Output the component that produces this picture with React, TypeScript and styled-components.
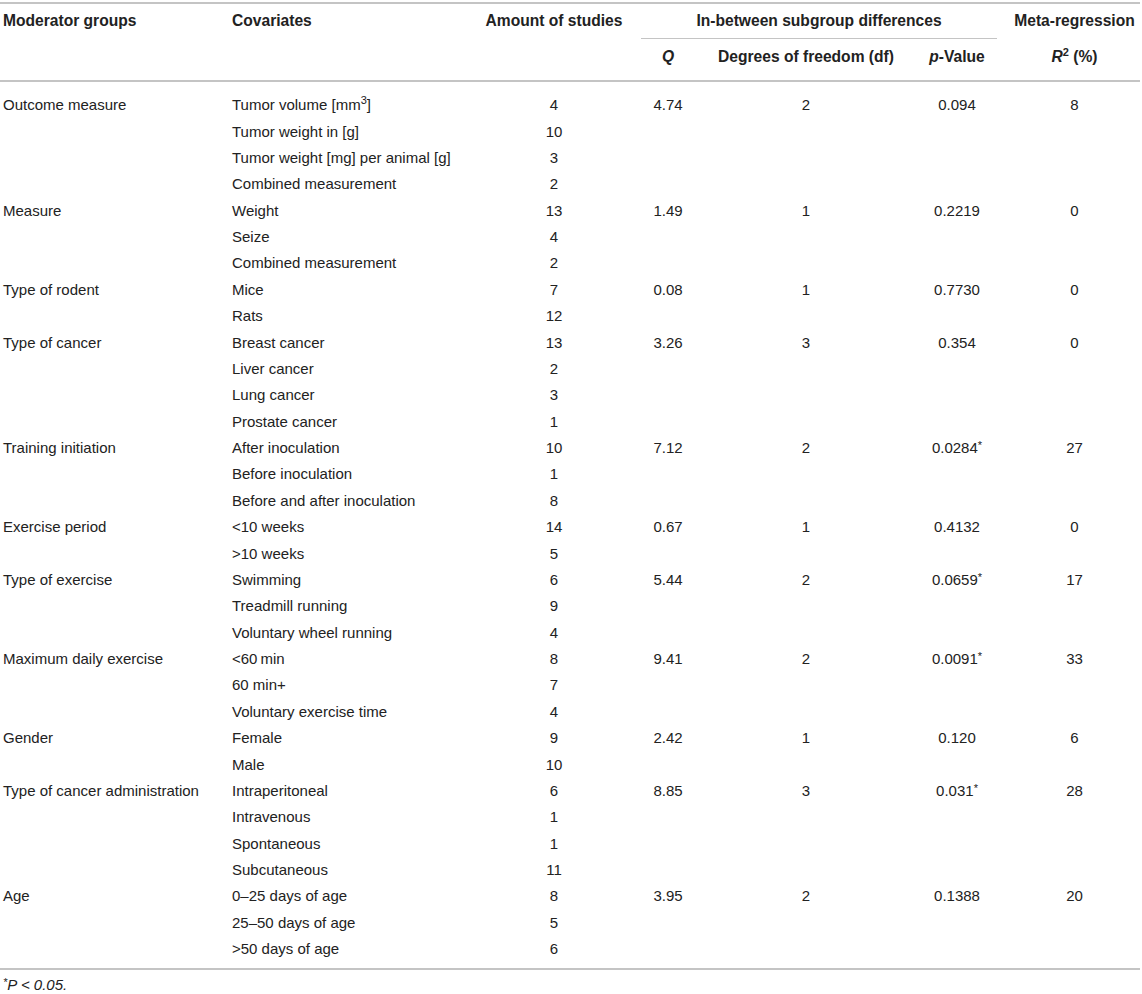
import React from "react";
import styled, { createGlobalStyle } from "styled-components";

const GlobalStyle = createGlobalStyle`
  html, body { margin: 0; padding: 0; background: #ffffff; }
  body { font-family: "Liberation Sans", Arial, sans-serif; color: #222222; }
`;

const Page = styled.div`
  width: 1142px;
  padding-top: 2px;
`;

const Table = styled.table`
  width: 1140px;
  border-collapse: collapse;
  table-layout: fixed;
  font-family: "Liberation Sans", Arial, sans-serif;
  font-size: 15px;
  line-height: 16px;
  color: #222222;
  border-top: 2px solid #c4c4c4;
  border-bottom: 2px solid #c4c4c4;
`;

const Head = styled.thead`
  border-bottom: 2px solid #c4c4c4;
`;

const Th = styled.th<{ $align?: "left" | "center"; $row?: 1 | 2 }>`
  font-weight: bold;
  font-size: 15.6px;
  text-align: ${(p) => p.$align ?? "center"};
  vertical-align: top;
  padding: ${(p) => (p.$row === 2 ? "10px 0 15px" : "9px 0 10px")};
  padding-left: ${(p) => (p.$align === "left" ? "3px" : "0")};
  white-space: nowrap;
`;

const GroupTh = styled(Th)`
  background-image: linear-gradient(#c4c4c4, #c4c4c4);
  background-repeat: no-repeat;
  background-size: calc(100% - 24px) 1px;
  background-position: center bottom;
`;

const Td = styled.td<{ $align?: "left" | "center" }>`
  text-align: ${(p) => p.$align ?? "center"};
  padding: 5.2px 0;
  padding-left: ${(p) => (p.$align === "left" ? "3px" : "0")};
  white-space: nowrap;
  vertical-align: middle;
`;

const Body = styled.tbody`
  tr:first-child td { padding-top: 15.2px; }
  tr:last-child td { padding-bottom: 11.2px; }
`;

const Star = styled.sup`
  font-size: 11px;
  line-height: 0;
  vertical-align: 4px;
`;

const Sup = styled.sup`
  font-size: 11px;
  line-height: 0;
  vertical-align: 6px;
`;

const Em = styled.i`
  font-weight: bold;
  font-style: italic;
`;

const Footnote = styled.div`
  padding: 7px 0 0 3px;
  font-size: 15px;
  line-height: 16px;
  font-style: italic;
  color: #222222;
`;

type Row = {
  group?: string;
  cov: React.ReactNode;
  n: string;
  q?: string;
  df?: string;
  p?: string;
  sig?: boolean;
  r2?: string;
};

const rows: Row[] = [
  { group: "Outcome measure", cov: <>Tumor volume [mm<Sup>3</Sup>]</>, n: "4", q: "4.74", df: "2", p: "0.094", r2: "8" },
  { cov: "Tumor weight in [g]", n: "10" },
  { cov: "Tumor weight [mg] per animal [g]", n: "3" },
  { cov: "Combined measurement", n: "2" },
  { group: "Measure", cov: "Weight", n: "13", q: "1.49", df: "1", p: "0.2219", r2: "0" },
  { cov: "Seize", n: "4" },
  { cov: "Combined measurement", n: "2" },
  { group: "Type of rodent", cov: "Mice", n: "7", q: "0.08", df: "1", p: "0.7730", r2: "0" },
  { cov: "Rats", n: "12" },
  { group: "Type of cancer", cov: "Breast cancer", n: "13", q: "3.26", df: "3", p: "0.354", r2: "0" },
  { cov: "Liver cancer", n: "2" },
  { cov: "Lung cancer", n: "3" },
  { cov: "Prostate cancer", n: "1" },
  { group: "Training initiation", cov: "After inoculation", n: "10", q: "7.12", df: "2", p: "0.0284", sig: true, r2: "27" },
  { cov: "Before inoculation", n: "1" },
  { cov: "Before and after inoculation", n: "8" },
  { group: "Exercise period", cov: "<10 weeks", n: "14", q: "0.67", df: "1", p: "0.4132", r2: "0" },
  { cov: ">10 weeks", n: "5" },
  { group: "Type of exercise", cov: "Swimming", n: "6", q: "5.44", df: "2", p: "0.0659", sig: true, r2: "17" },
  { cov: "Treadmill running", n: "9" },
  { cov: "Voluntary wheel running", n: "4" },
  { group: "Maximum daily exercise", cov: "<60\u2009min", n: "8", q: "9.41", df: "2", p: "0.0091", sig: true, r2: "33" },
  { cov: "60 min+", n: "7" },
  { cov: "Voluntary exercise time", n: "4" },
  { group: "Gender", cov: "Female", n: "9", q: "2.42", df: "1", p: "0.120", r2: "6" },
  { cov: "Male", n: "10" },
  { group: "Type of cancer administration", cov: "Intraperitoneal", n: "6", q: "8.85", df: "3", p: "0.031", sig: true, r2: "28" },
  { cov: "Intravenous", n: "1" },
  { cov: "Spontaneous", n: "1" },
  { cov: "Subcutaneous", n: "11" },
  { group: "Age", cov: "0–25 days of age", n: "8", q: "3.95", df: "2", p: "0.1388", r2: "20" },
  { cov: "25–50 days of age", n: "5" },
  { cov: ">50 days of age", n: "6" },
];

export default function App() {
  return (
    <>
      <GlobalStyle />
      <Page>
        <Table>
          <colgroup>
            <col style={{ width: 229 }} />
            <col style={{ width: 250 }} />
            <col style={{ width: 150 }} />
            <col style={{ width: 78 }} />
            <col style={{ width: 198 }} />
            <col style={{ width: 104 }} />
            <col style={{ width: 131 }} />
          </colgroup>
          <Head>
            <tr>
              <Th $align="left">Moderator groups</Th>
              <Th $align="left">Covariates</Th>
              <Th>Amount of studies</Th>
              <GroupTh colSpan={3}>In-between subgroup differences</GroupTh>
              <Th>Meta-regression</Th>
            </tr>
            <tr>
              <Th $row={2} />
              <Th $row={2} />
              <Th $row={2} />
              <Th $row={2}>
                <Em>Q</Em>
              </Th>
              <Th $row={2}>Degrees of freedom (df)</Th>
              <Th $row={2}>
                <Em>p</Em>-Value
              </Th>
              <Th $row={2}>
                <Em>R</Em>
                <Sup>2</Sup> (%)
              </Th>
            </tr>
          </Head>
          <Body>
            {rows.map((r, i) => (
              <tr key={i}>
                <Td $align="left">{r.group ?? ""}</Td>
                <Td $align="left">{r.cov}</Td>
                <Td>{r.n}</Td>
                <Td>{r.q ?? ""}</Td>
                <Td>{r.df ?? ""}</Td>
                <Td>
                  {r.p ?? ""}
                  {r.sig ? <Star>*</Star> : null}
                </Td>
                <Td>{r.r2 ?? ""}</Td>
              </tr>
            ))}
          </Body>
        </Table>
        <Footnote>
          <Star>*</Star>P &lt; 0.05.
        </Footnote>
      </Page>
    </>
  );
}
